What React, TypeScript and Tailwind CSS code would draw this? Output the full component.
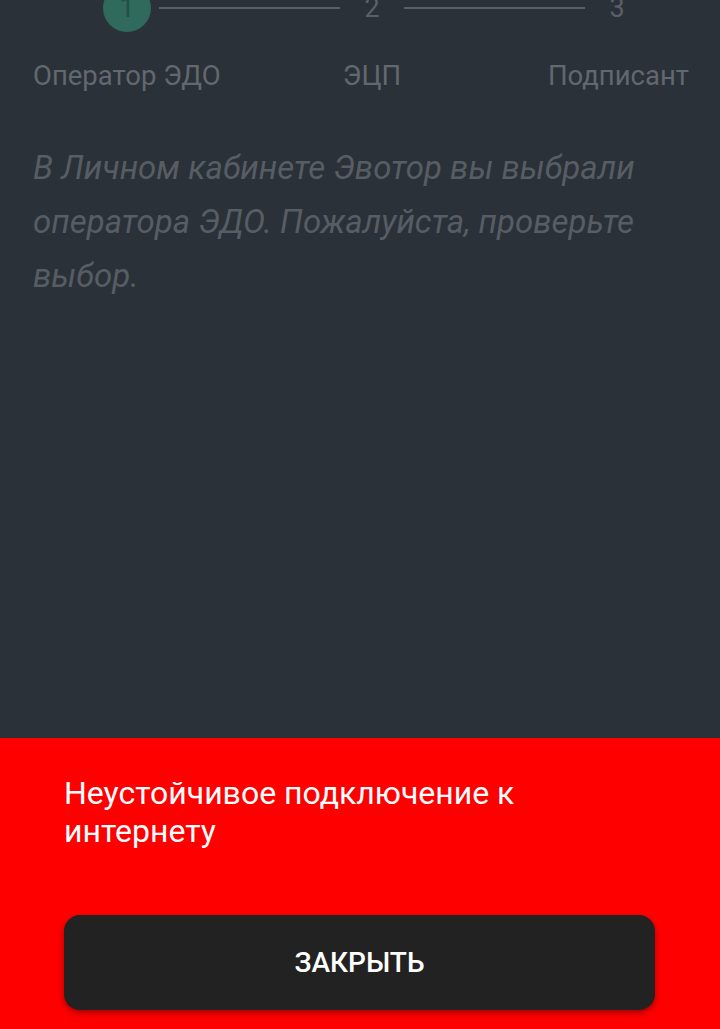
import React from "react";

const font = { fontFamily: "Roboto, 'Noto Sans', sans-serif" };

function Stepper() {
  return (
    <div className="-mt-[16px] flex h-[48px] items-center">
      <div className="ml-[103px] flex h-[48px] w-[48px] items-center justify-center rounded-full bg-[#2f6a5d] text-[27px] text-[#234f46]">
        1
      </div>
      <div className="ml-[8px] h-[2px] w-[181px] bg-[#5a6067]" />
      <div className="flex w-[64px] justify-center text-[27px] text-[#5a6067]">2</div>
      <div className="h-[2px] w-[181px] bg-[#5a6067]" />
      <div className="flex w-[64px] justify-center text-[27px] text-[#5a6067]">3</div>
    </div>
  );
}

function StepLabels() {
  return (
    <div className="mt-[28px] flex text-[27.5px] leading-[32px] text-[#62686f]">
      <div className="w-[340px] whitespace-nowrap pl-[33px]">Оператор ЭДО</div>
      <div className="flex w-[64px] justify-center whitespace-nowrap">ЭЦП</div>
      <div className="flex-1 whitespace-nowrap pr-[31px] text-right">Подписант</div>
    </div>
  );
}

export default function App() {
  return (
    <div className="flex h-[1029px] w-[720px] flex-col overflow-hidden bg-[#2b3138]" style={font}>
      <div className="flex-1">
        <Stepper />
        <StepLabels />
        <p className="mt-[49px] w-[675px] pl-[33px] text-[33px] italic leading-[54px] text-[#575d64]">
          В Личном кабинете Эвотор вы выбрали оператора ЭДО. Пожалуйста, проверьте выбор.
        </p>
      </div>
      <div className="flex h-[291px] flex-col bg-[#ff0000] px-[64px] pt-[36px]">
        <div className="text-[32px] leading-[38px] text-white">
          Неустойчивое подключение к интернету
        </div>
        <button className="mt-[65px] flex h-[95px] w-[591px] items-center justify-center rounded-[16px] bg-[#222222] text-[28px] font-medium text-white shadow-[0_3px_6px_rgba(0,0,0,0.35)]">
          ЗАКРЫТЬ
        </button>
      </div>
    </div>
  );
}
